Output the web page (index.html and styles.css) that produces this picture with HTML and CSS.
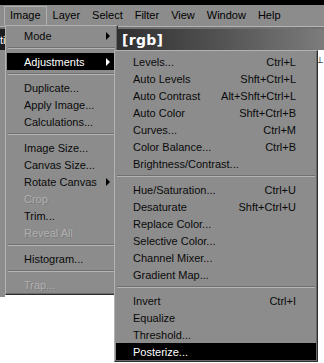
FILE: index.html
```html
<!DOCTYPE html>
<html lang="en">
<head>
  <meta charset="UTF-8" />
  <title>Image menu</title>
  <link rel="stylesheet" href="styles.css">
</head>
<body>
  <div class="screen">
    <div class="topstrip"></div>

    <div class="menubar">
      <span class="mb-item active">Image</span>
      <span class="mb-item">Layer</span>
      <span class="mb-item">Select</span>
      <span class="mb-item">Filter</span>
      <span class="mb-item">View</span>
      <span class="mb-item">Window</span>
      <span class="mb-item">Help</span>
    </div>

    <div class="docbar">
      <div class="doc-title">
        <span class="doc-cut">ti</span>
        <span class="doc-name">[rgb]</span>
      </div>
    </div>

    <div class="workspace">
      <div class="frame"></div>
      <div class="canvas"><span class="tick">&perp;</span></div>
    </div>

    <!-- Image menu -->
    <div class="menu image-menu">
      <div class="item"><span class="label">Mode</span><span class="arrow"></span></div>
      <div class="sep"></div>
      <div class="item selected"><span class="label">Adjustments</span><span class="arrow"></span></div>
      <div class="sep"></div>
      <div class="item"><span class="label">Duplicate...</span></div>
      <div class="item"><span class="label">Apply Image...</span></div>
      <div class="item"><span class="label">Calculations...</span></div>
      <div class="sep"></div>
      <div class="item"><span class="label">Image Size...</span></div>
      <div class="item"><span class="label">Canvas Size...</span></div>
      <div class="item"><span class="label">Rotate Canvas</span><span class="arrow"></span></div>
      <div class="item disabled"><span class="label">Crop</span></div>
      <div class="item"><span class="label">Trim...</span></div>
      <div class="item disabled"><span class="label">Reveal All</span></div>
      <div class="sep"></div>
      <div class="item"><span class="label">Histogram...</span></div>
      <div class="sep"></div>
      <div class="item disabled"><span class="label">Trap...</span></div>
    </div>

    <!-- Adjustments submenu -->
    <div class="menu sub-menu">
      <div class="item"><span class="label">Levels...</span><span class="key">Ctrl+L</span></div>
      <div class="item"><span class="label">Auto Levels</span><span class="key">Shft+Ctrl+L</span></div>
      <div class="item"><span class="label">Auto Contrast</span><span class="key">Alt+Shft+Ctrl+L</span></div>
      <div class="item"><span class="label">Auto Color</span><span class="key">Shft+Ctrl+B</span></div>
      <div class="item"><span class="label">Curves...</span><span class="key">Ctrl+M</span></div>
      <div class="item"><span class="label">Color Balance...</span><span class="key">Ctrl+B</span></div>
      <div class="item"><span class="label">Brightness/Contrast...</span></div>
      <div class="sep"></div>
      <div class="item"><span class="label">Hue/Saturation...</span><span class="key">Ctrl+U</span></div>
      <div class="item"><span class="label">Desaturate</span><span class="key">Shft+Ctrl+U</span></div>
      <div class="item"><span class="label">Replace Color...</span></div>
      <div class="item"><span class="label">Selective Color...</span></div>
      <div class="item"><span class="label">Channel Mixer...</span></div>
      <div class="item"><span class="label">Gradient Map...</span></div>
      <div class="sep"></div>
      <div class="item"><span class="label">Invert</span><span class="key">Ctrl+I</span></div>
      <div class="item"><span class="label">Equalize</span></div>
      <div class="item"><span class="label">Threshold...</span></div>
      <div class="item selected"><span class="label">Posterize...</span></div>
    </div>
  </div>
</body>
</html>
```

FILE: styles.css
```css
body {
  margin: 0;
  padding: 0;
  font-family: 'Liberation Sans', Arial, sans-serif;
  font-size: 11px;
  color: #000;
  background: #fff;
}

.screen {
  position: relative;
  width: 324px;
  height: 363px;
  overflow: hidden;
  background: #fff;
}

.topstrip {
  height: 5px;
  background: #000;
}

/* menu bar */
.menubar {
  display: flex;
  align-items: center;
  height: 21px;
  padding-left: 4px;
  background: #8c8c8c;
  border-bottom: 1px solid #b4b4b4;
}

.mb-item {
  padding: 2px 5px 3px 5px;
  border: 1px solid transparent;
  line-height: 13px;
}

.mb-item.active {
  border-color: #b0b0b0 #b0b0b0 #6a6a6a #b0b0b0;
}

/* document title bar */
.docbar {
  border-top: 2px solid #707070;
}

.doc-title {
  display: flex;
  align-items: center;
  height: 21px;
  background: linear-gradient(to right, #1c1c1c, #2e2e2e 35%, #555 70%, #7c7c7c);
  color: #fff;
}

.doc-cut {
  width: 122px;
  font-size: 11px;
}

.doc-name {
  font-family: 'DejaVu Sans', sans-serif;
  font-weight: bold;
  font-size: 14px;
  letter-spacing: 0.3px;
}

/* canvas */
.workspace {
  display: flex;
  align-items: flex-start;
}

.frame {
  width: 5px;
  height: 247px;
  background: #8c8c8c;
}

.canvas {
  flex: 1;
  display: flex;
  justify-content: flex-end;
  padding-top: 5px;
}

.tick {
  font-size: 9px;
  line-height: 10px;
  margin-right: 0;
}

/* dropdown menus */
.menu {
  position: absolute;
  box-sizing: border-box;
  background: #8c8c8c;
  border: 1px solid;
  border-color: #b2b2b2 #2e2e2e #2e2e2e #b2b2b2;
  box-shadow: inset -1px -1px 0 #6a6a6a;
}

.image-menu {
  left: 5px;
  top: 25px;
  width: 113px;
  padding: 1px;
}

.sub-menu {
  left: 114px;
  top: 50px;
  width: 204px;
  padding: 2px 1px 1px 1px;
}

.item {
  display: flex;
  align-items: center;
  height: 17px;
  white-space: nowrap;
  color: #0a0a0a;
}

.image-menu .item {
  padding: 0 6px 0 17px;
}

.sub-menu .item {
  padding: 0 20px 0 17px;
}

.key {
  margin-left: auto;
}

.arrow {
  margin-left: auto;
  width: 0;
  height: 0;
  border-left: 4px solid #000;
  border-top: 4px solid transparent;
  border-bottom: 4px solid transparent;
}

.item.selected {
  background: #000;
  color: #fff;
}

.item.selected .arrow {
  border-left-color: #fff;
}

.item.disabled {
  color: #b0b0b0;
  text-shadow: 1px 1px 0 #7c7c7c;
}

.sep {
  margin: 3px 1px 4px 1px;
  border-top: 1px solid #707070;
  border-bottom: 1px solid #b4b4b4;
}
```
